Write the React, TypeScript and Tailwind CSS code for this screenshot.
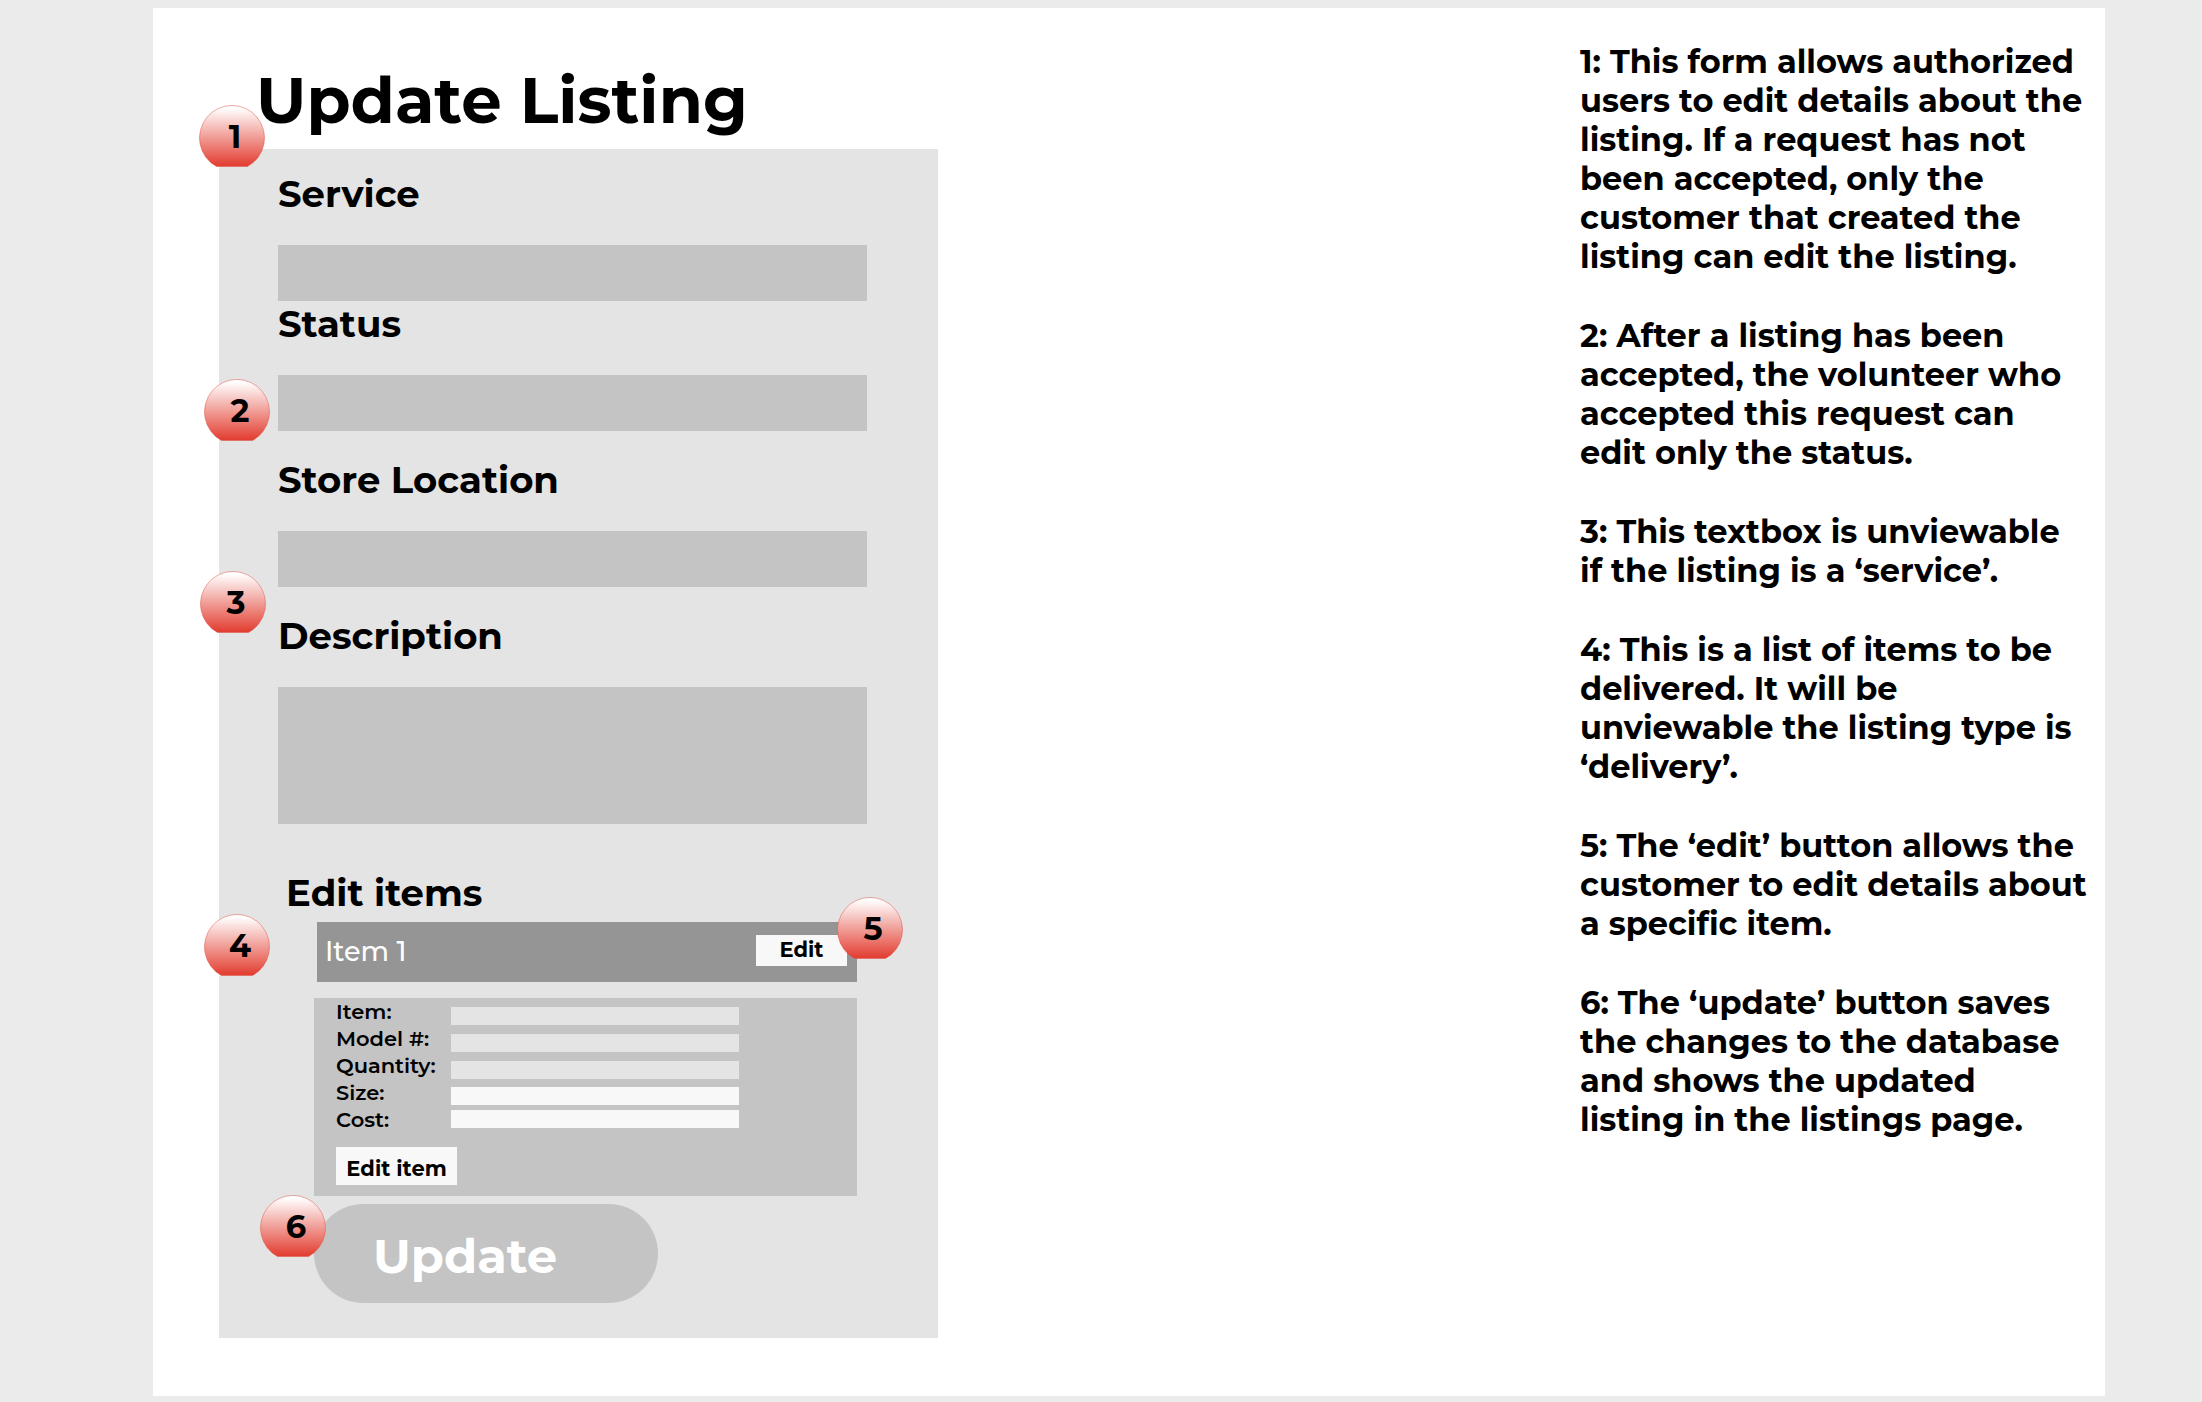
import { useId } from "react";

const notes: string[][] = [
  [
    "1: This form allows authorized",
    "users to edit details about the",
    "listing. If a request has not",
    "been accepted, only the",
    "customer that created the",
    "listing can edit the listing.",
  ],
  [
    "2: After a listing has been",
    "accepted, the volunteer who",
    "accepted this request can",
    "edit only the status.",
  ],
  ["3: This textbox is unviewable", "if the listing is a ‘service’."],
  [
    "4: This is a list of items to be",
    "delivered. It will be",
    "unviewable the listing type is",
    "‘delivery’.",
  ],
  [
    "5: The ‘edit’ button allows the",
    "customer to edit details about",
    "a specific item.",
  ],
  [
    "6: The ‘update’ button saves",
    "the changes to the database",
    "and shows the updated",
    "listing in the listings page.",
  ],
];

const itemFields = [
  { id: "item-name", label: "Item:", style: "bg-[#e4e4e4]" },
  { id: "item-model", label: "Model #:", style: "mt-[9px] bg-[#e4e4e4]" },
  { id: "item-quantity", label: "Quantity:", style: "mt-[9px] bg-[#e4e4e4]" },
  { id: "item-size", label: "Size:", style: "mt-2 bg-[#f8f8f8]" },
  { id: "item-cost", label: "Cost:", style: "mt-[5px] bg-[#f8f8f8]" },
];

const labelClass = "block text-[37px] leading-[40px] font-bold";
const fieldClass = "mt-[31px] block w-full bg-[#c4c4c4] px-4 text-2xl outline-none";

/* Numbered marker: a circle with a flat base, faded from white to red. */
function Badge({ n, place }: { n: number; place: string }) {
  const gradient = useId();
  return (
    <span className={`absolute h-[62px] w-[66px] ${place}`}>
      <svg viewBox="0 0 66 62" className="absolute inset-0 h-full w-full" aria-hidden="true">
        <defs>
          <linearGradient id={gradient} x1="0" y1="0" x2="0" y2="1">
            <stop offset="0.04" stopColor="#ffffff" />
            <stop offset="1" stopColor="#e23b2e" />
          </linearGradient>
        </defs>
        <path
          d="M17.5 61.5 A32.5 32.5 0 1 1 48.5 61.5 Z"
          fill={`url(#${gradient})`}
          stroke="#e2584d"
          strokeOpacity="0.5"
          strokeWidth="1"
        />
      </svg>
      <span className="relative flex h-full items-center justify-center pt-0.5 pl-1.5 text-[32px] leading-none font-bold">
        {n}
      </span>
    </span>
  );
}

export default function App() {
  return (
    <div className="min-h-screen bg-[#ebebeb] pt-2 pr-[97px] pb-1.5 pl-[153px] font-['Montserrat','Inter',sans-serif] text-black">
      <main className="flex min-h-[calc(100vh-14px)] justify-between bg-white pr-4 pl-[66px]">
        <section className="w-[719px] shrink-0 pt-[56px]">
          <h1 className="relative z-10 pl-[37px] text-[64px] leading-[72px] font-bold whitespace-nowrap">
            Update Listing
          </h1>
          <form
            className="relative mt-[13px] bg-[#e4e4e4] pt-[25px] pr-[71px] pb-[35px] pl-[59px]"
            onSubmit={(e) => e.preventDefault()}
          >
            <Badge n={1} place="-top-11 -left-5" />

            <div>
              <label htmlFor="service" className={labelClass}>Service</label>
              <input id="service" type="text" className={`${fieldClass} h-14`} />
            </div>

            <div className="relative mt-[3px]">
              <label htmlFor="status" className={labelClass}>Status</label>
              <input id="status" type="text" className={`${fieldClass} h-14`} />
              <Badge n={2} place="top-[75px] -left-[74px]" />
            </div>

            <div className="relative mt-[29px]">
              <label htmlFor="store" className={labelClass}>Store Location</label>
              <input id="store" type="text" className={`${fieldClass} h-14`} />
              <Badge n={3} place="top-[111px] -left-[78px]" />
            </div>

            <div className="mt-[29px]">
              <label htmlFor="description" className={labelClass}>Description</label>
              <textarea id="description" className={`${fieldClass} h-[137px] resize-none`} />
            </div>

            <div className="relative mt-[49px] pl-2">
              <h2 className={labelClass}>Edit items</h2>
              <Badge n={4} place="top-[41px] -left-[74px]" />
            </div>

            <div className="mt-[9px] mr-[10px] ml-9">
              <div className="relative ml-[3px] flex h-[60px] items-center justify-between bg-[#959595] pr-[10px] pb-1 pl-2">
                <span className="pt-1 text-[27px] font-medium text-white">Item 1</span>
                <button type="button" className="h-[31px] w-[91px] bg-[#f8f8f8] pb-0.5 text-[21px] leading-none font-bold">
                  Edit
                </button>
                <Badge n={5} place="-top-[25px] -right-[46px]" />
              </div>

              <div className="mt-4 bg-[#c4c4c4] pb-[11px] pl-[22px]">
                <div className="flex">
                  <div className="flex w-[115px] shrink-0 flex-col text-[21px] leading-[27px] font-semibold whitespace-nowrap">
                    {itemFields.map((f) => (
                      <label key={f.id} htmlFor={f.id}>{f.label}</label>
                    ))}
                  </div>
                  <div className="flex w-72 flex-col pt-[9px]">
                    {itemFields.map((f) => (
                      <input key={f.id} id={f.id} type="text" className={`h-[18px] px-1 text-sm outline-none ${f.style}`} />
                    ))}
                  </div>
                </div>
                <button type="button" className="mt-[14px] block h-[38px] w-[121px] bg-[#f8f8f8] pt-1 text-[21px] leading-none font-bold">
                  Edit item
                </button>
              </div>

              <div className="relative mt-2">
                <button type="submit" className="block h-[99px] w-[344px] rounded-full bg-[#c4c4c4] pt-1 pl-[59px] text-left text-[48px] leading-none font-bold text-white">
                  Update
                </button>
                <Badge n={6} place="-top-[9px] -left-[54px]" />
              </div>
            </div>
          </form>
        </section>

        <aside className="flex w-[509px] flex-col gap-10 pt-[34px] text-[32px] leading-[39px] font-bold whitespace-nowrap">
          {notes.map((lines) => (
            <p key={lines[0]}>
              {lines.map((line) => (
                <span key={line} className="block">{line}</span>
              ))}
            </p>
          ))}
        </aside>
      </main>
    </div>
  );
}
